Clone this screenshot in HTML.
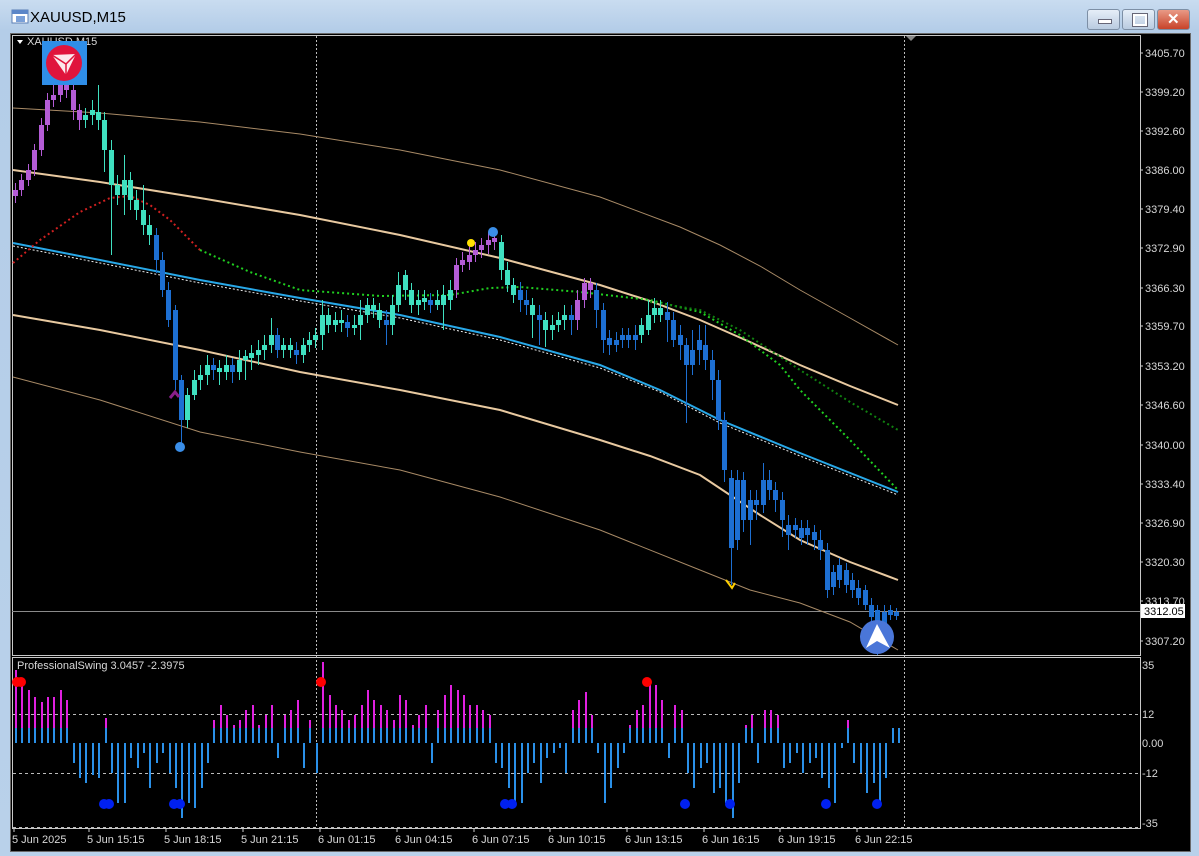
<!DOCTYPE html>
<html><head><meta charset="utf-8"><style>
html,body{margin:0;padding:0;width:1199px;height:856px;overflow:hidden;background:#bcd3ea;font-family:"Liberation Sans",sans-serif}
#win{position:absolute;left:0;top:0;width:1199px;height:856px;background:linear-gradient(#c9dcf0,#b4cde8 30px,#b9d1ea)}
#title{position:absolute;left:30px;top:9px;font-size:15px;color:#000}
.btn{position:absolute;top:9px;width:31px;height:19px;border:1px solid #7d8fa5;border-radius:3px;background:linear-gradient(#e6eef8,#b9cbe0)}
#chart{position:absolute;left:10px;top:33px;width:1181px;height:819px;background:#000;border:1px solid #6a6a6a;box-sizing:border-box}
svg text{font-family:"Liberation Sans",sans-serif;font-size:11px;fill:#d8d8d8}
</style></head><body>
<div id="win">
<svg width="20" height="18" style="position:absolute;left:11px;top:8px"><rect x="1" y="2" width="16" height="13" fill="#fff" stroke="#5b7fb5"/><rect x="1" y="2" width="16" height="4" fill="#5b86c8"/><rect x="5" y="8" width="9" height="6" fill="#7aa0d8"/></svg>
<div id="title">XAUUSD,M15</div>
<div class="btn" style="left:1087px"><div style="position:absolute;left:10px;top:9px;width:12px;height:3px;background:#fff;border:1px solid #667"></div></div>
<div class="btn" style="left:1122px"><div style="position:absolute;left:10px;top:4px;width:10px;height:8px;border:2px solid #fff;outline:1px solid #667"></div></div>
<div class="btn" style="left:1157px;background:linear-gradient(#e99a86,#c8432a)"><div style="position:absolute;left:9px;top:0px;color:#fff;font-weight:bold;font-size:15px">✕</div></div>
<div id="chart"></div>
<svg width="1199" height="856" style="position:absolute;left:0;top:0">
<rect x="12.5" y="35.5" width="1128" height="620" fill="none" stroke="#c8c8c8"/>
<rect x="12.5" y="657.5" width="1128" height="171" fill="none" stroke="#c8c8c8"/>
<line x1="12" y1="611.5" x2="1140" y2="611.5" stroke="#8a8a8a"/>
<line x1="316.5" y1="36" x2="316.5" y2="828" stroke="#bbb" stroke-dasharray="2,2"/>
<line x1="904.5" y1="36" x2="904.5" y2="828" stroke="#bbb" stroke-dasharray="2,2"/>
<polygon points="906,36 916,36 911,41" fill="#888"/>
<line x1="13" y1="714.5" x2="1140" y2="714.5" stroke="#bbb" stroke-dasharray="3,3"/>
<line x1="13" y1="773.5" x2="1140" y2="773.5" stroke="#bbb" stroke-dasharray="3,3"/>
<line x1="13" y1="827.5" x2="1140" y2="827.5" stroke="#bbb" stroke-dasharray="3,3"/>

<g stroke="#ccc">
<path d="M1140,53h3M1140,92h3M1140,131h3M1140,170h3M1140,209h3M1140,248h3M1140,288h3M1140,326h3M1140,366h3M1140,405h3M1140,445h3M1140,484h3M1140,523h3M1140,562h3M1140,601h3M1140,641h3"/>
<path d="M14,828v4M89,828v4M166,828v4M243,828v4M320,828v4M397,828v4M474,828v4M550,828v4M627,828v4M704,828v4M780,828v4M857,828v4"/>
</g>
<text x="1145" y="57">3405.70</text><text x="1145" y="96">3399.20</text><text x="1145" y="135">3392.60</text><text x="1145" y="174">3386.00</text><text x="1145" y="213">3379.40</text><text x="1145" y="252">3372.90</text><text x="1145" y="292">3366.30</text><text x="1145" y="330">3359.70</text><text x="1145" y="370">3353.20</text><text x="1145" y="409">3346.60</text><text x="1145" y="449">3340.00</text><text x="1145" y="488">3333.40</text><text x="1145" y="527">3326.90</text><text x="1145" y="566">3320.30</text><text x="1145" y="605">3313.70</text><text x="1145" y="645">3307.20</text>
<rect x="1141" y="604" width="44" height="14" fill="#fff"/><text x="1144" y="615" style="fill:#000">3312.05</text>
<text x="1142" y="669">35</text><text x="1142" y="718">12</text><text x="1142" y="747">0.00</text><text x="1142" y="777">-12</text><text x="1142" y="827">-35</text>
<text x="12" y="843">5 Jun 2025</text><text x="87" y="843">5 Jun 15:15</text><text x="164" y="843">5 Jun 18:15</text><text x="241" y="843">5 Jun 21:15</text><text x="318" y="843">6 Jun 01:15</text><text x="395" y="843">6 Jun 04:15</text><text x="472" y="843">6 Jun 07:15</text><text x="548" y="843">6 Jun 10:15</text><text x="625" y="843">6 Jun 13:15</text><text x="702" y="843">6 Jun 16:15</text><text x="778" y="843">6 Jun 19:15</text><text x="855" y="843">6 Jun 22:15</text>
<text x="17" y="669">ProfessionalSwing 3.0457 -2.3975</text>
<polygon points="17,40 23,40 20,44" fill="#fff"/><text x="27" y="45">XAUUSD,M15</text>

<g fill="none">
<polyline stroke="#a88a66" stroke-width="1" points="13,108 100,113 200,122 300,134 400,150 500,170 600,197 680,227 720,245 760,266 800,290 850,318 898,345"/>
<polyline stroke="#e8c9a0" stroke-width="2" points="13,170 100,182 200,198 300,215 400,235 500,258 600,285 650,301 700,320 750,342 800,365 850,386 898,405"/>
<polyline stroke="#e8c9a0" stroke-width="2" points="13,315 100,330 200,350 300,372 400,390 500,410 600,440 650,456 700,475 730,495 760,515 800,540 850,562 898,580"/>
<polyline stroke="#a88a66" stroke-width="1" points="13,377 100,400 200,432 300,452 400,470 500,497 600,530 700,570 750,590 800,603 850,622 898,650"/>
<polyline stroke="#eee" stroke-width="1" stroke-dasharray="2,2" points="13,246 100,263 200,283 300,301 400,318 500,340 600,368 660,392 720,423 800,456 898,495"/>
<polyline stroke="#28a8e8" stroke-width="2" points="13,243 100,260 200,280 300,298 400,315 500,337 600,365 660,390 720,420 800,453 898,492"/>
<polyline stroke="#d02020" stroke-width="2" stroke-dasharray="2,3" points="13,263 40,240 80,212 110,198 130,196 150,205 170,220 185,235 200,250"/>
<polyline stroke="#20d020" stroke-width="2" stroke-dasharray="2,3" points="200,250 250,272 300,290 380,296 450,295 490,288 520,287 580,292 650,300 700,312 740,335 780,365 800,390 850,440 898,490"/>
<polyline stroke="#108010" stroke-width="2" stroke-dasharray="2,3" points="650,302 700,310 740,330 800,370 850,402 898,430"/>
</g>

<path fill="#b45cd6" d="M13,190h5v6h-5zM15,183h1v20h-1zM19,180h5v10h-5zM21,174h1v22h-1zM26,170h5v10h-5zM28,164h1v22h-1zM32,150h5v20h-5zM34,144h1v32h-1zM39,125h5v25h-5zM41,118h1v38h-1zM45,100h5v25h-5zM47,93h1v38h-1zM51,95h5v5h-5zM53,85h1v22h-1zM58,85h5v10h-5zM60,72h1v30h-1zM64,85h5v5h-5zM66,78h1v20h-1zM71,90h5v20h-5zM73,85h1v35h-1zM77,110h5v10h-5zM79,104h1v26h-1zM454,265h5v25h-5zM456,258h1v40h-1zM460,260h5v5h-5zM462,252h1v20h-1zM467,255h5v7h-5zM469,245h1v25h-1zM473,250h5v5h-5zM475,242h1v20h-1zM479,245h5v5h-5zM481,238h1v20h-1zM486,240h5v5h-5zM488,232h1v22h-1zM492,238h5v4h-5zM494,230h1v20h-1zM575,300h5v20h-5zM577,290h1v40h-1zM582,283h5v17h-5zM584,278h1v30h-1zM588,283h5v7h-5zM590,278h1v20h-1z"/>
<path fill="#3fe0c0" d="M83,115h5v5h-5zM85,108h1v20h-1zM90,110h5v5h-5zM92,100h1v25h-1zM96,112h5v8h-5zM98,85h1v45h-1zM102,120h5v30h-5zM104,112h1v60h-1zM109,150h5v35h-5zM111,140h1v115h-1zM115,185h5v10h-5zM117,175h1v30h-1zM122,180h5v15h-5zM124,155h1v60h-1zM128,180h5v20h-5zM130,172h1v38h-1zM134,200h5v10h-5zM136,190h1v30h-1zM141,210h5v15h-5zM143,185h1v50h-1zM147,225h5v10h-5zM149,215h1v30h-1zM185,395h5v25h-5zM187,388h1v40h-1zM192,380h5v15h-5zM194,370h1v30h-1zM198,375h5v5h-5zM200,365h1v25h-1zM205,365h5v10h-5zM207,355h1v30h-1zM217,368h5v4h-5zM219,360h1v25h-1zM224,365h5v7h-5zM226,355h1v25h-1zM237,360h5v12h-5zM239,350h1v30h-1zM243,356h5v4h-5zM245,350h1v30h-1zM249,353h5v5h-5zM251,345h1v25h-1zM256,350h5v5h-5zM258,340h1v25h-1zM262,345h5v5h-5zM264,335h1v25h-1zM269,335h5v10h-5zM271,318h1v35h-1zM281,345h5v5h-5zM283,338h1v20h-1zM288,345h5v5h-5zM290,338h1v20h-1zM301,345h5v10h-5zM303,338h1v25h-1zM307,340h5v5h-5zM309,332h1v20h-1zM313,335h5v5h-5zM315,328h1v20h-1zM320,315h5v20h-5zM322,300h1v50h-1zM326,315h5v10h-5zM328,308h1v25h-1zM333,320h5v5h-5zM335,312h1v20h-1zM339,320h5v3h-5zM341,310h1v22h-1zM352,325h5v3h-5zM354,315h1v20h-1zM358,315h5v10h-5zM360,300h1v40h-1zM365,305h5v10h-5zM367,298h1v25h-1zM371,305h5v5h-5zM373,298h1v20h-1zM377,310h5v10h-5zM379,303h1v25h-1zM390,305h5v20h-5zM392,295h1v40h-1zM396,285h5v20h-5zM398,272h1v40h-1zM403,275h5v15h-5zM405,270h1v30h-1zM409,290h5v15h-5zM411,283h1v30h-1zM416,300h5v5h-5zM418,290h1v25h-1zM422,298h5v4h-5zM424,290h1v20h-1zM435,300h5v5h-5zM437,290h1v20h-1zM441,295h5v10h-5zM443,285h1v45h-1zM448,290h5v10h-5zM450,280h1v30h-1zM499,242h5v28h-5zM501,235h1v45h-1zM505,270h5v15h-5zM507,262h1v30h-1zM511,285h5v10h-5zM513,278h1v25h-1zM530,305h5v10h-5zM532,298h1v40h-1zM543,320h5v10h-5zM545,312h1v35h-1zM550,325h5v5h-5zM552,315h1v25h-1zM556,320h5v5h-5zM558,312h1v20h-1zM562,315h5v5h-5zM564,305h1v25h-1zM639,325h5v10h-5zM641,318h1v25h-1zM646,315h5v15h-5zM648,300h1v35h-1zM652,308h5v7h-5zM654,298h1v25h-1zM658,308h5v7h-5zM660,300h1v22h-1z"/>
<path fill="#1d6fd2" d="M154,235h5v25h-5zM156,228h1v45h-1zM160,260h5v30h-5zM162,252h1v45h-1zM166,290h5v30h-5zM168,282h1v45h-1zM173,310h5v70h-5zM175,305h1v85h-1zM179,380h5v40h-5zM181,375h1v70h-1zM211,365h5v5h-5zM213,358h1v22h-1zM230,365h5v7h-5zM232,358h1v25h-1zM275,335h5v15h-5zM277,328h1v30h-1zM294,350h5v5h-5zM296,342h1v22h-1zM345,322h5v6h-5zM347,315h1v22h-1zM384,320h5v5h-5zM386,310h1v35h-1zM428,300h5v5h-5zM430,293h1v20h-1zM518,290h5v10h-5zM520,282h1v30h-1zM524,300h5v5h-5zM526,290h1v25h-1zM537,315h5v5h-5zM539,305h1v40h-1zM569,315h5v5h-5zM571,305h1v30h-1zM594,290h5v20h-5zM596,283h1v45h-1zM601,310h5v30h-5zM603,303h1v50h-1zM607,338h5v7h-5zM609,330h1v25h-1zM614,340h5v5h-5zM616,332h1v20h-1zM620,335h5v5h-5zM622,328h1v20h-1zM626,335h5v5h-5zM628,328h1v20h-1zM633,335h5v5h-5zM635,325h1v25h-1zM665,312h5v8h-5zM667,302h1v40h-1zM671,320h5v20h-5zM673,312h1v35h-1zM678,335h5v10h-5zM680,325h1v35h-1zM684,345h5v20h-5zM686,338h1v85h-1zM690,350h5v15h-5zM692,330h1v45h-1zM697,340h5v10h-5zM699,325h1v40h-1zM703,345h5v15h-5zM705,325h1v45h-1zM710,360h5v20h-5zM712,350h1v50h-1zM716,380h5v40h-5zM718,370h1v60h-1zM722,420h5v50h-5zM724,412h1v70h-1zM729,478h5v70h-5zM731,470h1v115h-1zM735,480h5v60h-5zM737,470h1v80h-1zM741,480h5v40h-5zM743,472h1v60h-1zM748,500h5v20h-5zM750,490h1v55h-1zM754,500h5v5h-5zM756,490h1v30h-1zM761,480h5v25h-5zM763,463h1v50h-1zM767,480h5v10h-5zM769,470h1v30h-1zM773,490h5v10h-5zM775,482h1v30h-1zM780,500h5v20h-5zM782,492h1v45h-1zM786,525h5v10h-5zM788,515h1v35h-1zM793,525h5v5h-5zM795,518h1v20h-1zM799,528h5v10h-5zM801,520h1v25h-1zM805,528h5v7h-5zM807,520h1v25h-1zM812,532h5v8h-5zM814,525h1v25h-1zM818,540h5v10h-5zM820,530h1v30h-1zM825,550h5v40h-5zM827,543h1v55h-1zM831,572h5v15h-5zM833,565h1v30h-1zM837,565h5v15h-5zM839,558h1v30h-1zM844,570h5v15h-5zM846,563h1v30h-1zM850,580h5v10h-5zM852,573h1v25h-1zM856,588h5v10h-5zM858,580h1v25h-1zM863,590h5v15h-5zM865,585h1v25h-1zM869,605h5v12h-5zM871,598h1v40h-1zM875,610h5v30h-5zM877,605h1v50h-1zM882,612h5v15h-5zM884,605h1v30h-1zM888,610h5v5h-5zM890,605h1v15h-1zM894,612h5v4h-5zM896,608h1v12h-1z"/>

<circle cx="180" cy="447" r="5" fill="#3a8ee8"/><circle cx="493" cy="232" r="5" fill="#3a8ee8"/><circle cx="471" cy="243" r="4" fill="#ffe000"/>
<path d="M726,580 l6,8 l3,-5" stroke="#ffd000" stroke-width="2" fill="none"/><path d="M170,398 l5,-6 l4,5" stroke="#8a1f8a" stroke-width="3" fill="none"/>
<rect x="42" y="41" width="45" height="44" fill="#2f8ee8"/><circle cx="64" cy="63" r="18" fill="#e0143c"/><path d="M52,55 L76,54 L66,75 Z" fill="#fff" opacity="0.9"/><path d="M52,55 L66,64 L76,54 M66,64 L66,75" stroke="#e0143c" stroke-width="1.5" fill="none"/>
<circle cx="877" cy="637" r="17" fill="#4a76d8"/><path d="M866,648 L877,624 L890,648 L877,641 Z" fill="#fff"/>

<path fill="#e020e0" d="M15,670h2V728h-2zM21,682h2V728h-2zM28,690h2V728h-2zM34,697h2V728h-2zM41,702h2V728h-2zM47,697h2V728h-2zM53,697h2V728h-2zM60,690h2V728h-2zM66,700h2V728h-2zM105,718h2V728h-2zM213,720h2V728h-2zM220,705h2V728h-2zM226,715h2V728h-2zM233,725h2V728h-2zM239,720h2V728h-2zM245,710h2V728h-2zM252,705h2V728h-2zM258,725h2V728h-2zM265,715h2V728h-2zM271,705h2V728h-2zM284,715h2V728h-2zM290,710h2V728h-2zM297,700h2V728h-2zM309,720h2V728h-2zM322,662h2V728h-2zM329,695h2V728h-2zM335,705h2V728h-2zM341,710h2V728h-2zM348,720h2V728h-2zM354,715h2V728h-2zM361,705h2V728h-2zM367,690h2V728h-2zM373,700h2V728h-2zM380,705h2V728h-2zM386,710h2V728h-2zM393,720h2V728h-2zM399,695h2V728h-2zM405,700h2V728h-2zM412,725h2V728h-2zM418,715h2V728h-2zM425,705h2V728h-2zM437,710h2V728h-2zM444,695h2V728h-2zM450,685h2V728h-2zM457,690h2V728h-2zM463,695h2V728h-2zM469,705h2V728h-2zM476,705h2V728h-2zM482,710h2V728h-2zM489,715h2V728h-2zM572,710h2V728h-2zM578,700h2V728h-2zM585,692h2V728h-2zM591,715h2V728h-2zM629,725h2V728h-2zM636,710h2V728h-2zM642,705h2V728h-2zM649,680h2V728h-2zM655,685h2V728h-2zM661,700h2V728h-2zM674,705h2V728h-2zM681,710h2V728h-2zM745,725h2V728h-2zM751,715h2V728h-2zM764,710h2V728h-2zM770,710h2V728h-2zM777,715h2V728h-2zM847,720h2V728h-2zM892,733h2V728h-2zM898,735h2V728h-2z"/>
<path fill="#2a90e8" d="M15,728h2V743h-2zM21,728h2V743h-2zM28,728h2V743h-2zM34,728h2V743h-2zM41,728h2V743h-2zM47,728h2V743h-2zM53,728h2V743h-2zM60,728h2V743h-2zM66,728h2V743h-2zM73,743h2V763h-2zM79,743h2V778h-2zM85,743h2V783h-2zM92,743h2V775h-2zM98,743h2V778h-2zM105,728h2V743h-2zM111,743h2V773h-2zM117,743h2V803h-2zM124,743h2V803h-2zM130,743h2V758h-2zM137,743h2V768h-2zM143,743h2V753h-2zM149,743h2V788h-2zM156,743h2V763h-2zM162,743h2V753h-2zM169,743h2V773h-2zM175,743h2V788h-2zM181,743h2V818h-2zM188,743h2V803h-2zM194,743h2V808h-2zM201,743h2V788h-2zM207,743h2V763h-2zM213,728h2V743h-2zM220,728h2V743h-2zM226,728h2V743h-2zM233,728h2V743h-2zM239,728h2V743h-2zM245,728h2V743h-2zM252,728h2V743h-2zM258,728h2V743h-2zM265,728h2V743h-2zM271,728h2V743h-2zM277,743h2V758h-2zM284,728h2V743h-2zM290,728h2V743h-2zM297,728h2V743h-2zM303,743h2V768h-2zM309,728h2V743h-2zM316,743h2V773h-2zM322,728h2V743h-2zM329,728h2V743h-2zM335,728h2V743h-2zM341,728h2V743h-2zM348,728h2V743h-2zM354,728h2V743h-2zM361,728h2V743h-2zM367,728h2V743h-2zM373,728h2V743h-2zM380,728h2V743h-2zM386,728h2V743h-2zM393,728h2V743h-2zM399,728h2V743h-2zM405,728h2V743h-2zM412,728h2V743h-2zM418,728h2V743h-2zM425,728h2V743h-2zM431,743h2V763h-2zM437,728h2V743h-2zM444,728h2V743h-2zM450,728h2V743h-2zM457,728h2V743h-2zM463,728h2V743h-2zM469,728h2V743h-2zM476,728h2V743h-2zM482,728h2V743h-2zM489,728h2V743h-2zM495,743h2V763h-2zM501,743h2V768h-2zM508,743h2V788h-2zM514,743h2V803h-2zM521,743h2V803h-2zM527,743h2V773h-2zM533,743h2V763h-2zM540,743h2V783h-2zM546,743h2V758h-2zM553,743h2V753h-2zM559,743h2V748h-2zM565,743h2V773h-2zM572,728h2V743h-2zM578,728h2V743h-2zM585,728h2V743h-2zM591,728h2V743h-2zM597,743h2V753h-2zM604,743h2V803h-2zM610,743h2V788h-2zM617,743h2V768h-2zM623,743h2V753h-2zM629,728h2V743h-2zM636,728h2V743h-2zM642,728h2V743h-2zM649,728h2V743h-2zM655,728h2V743h-2zM661,728h2V743h-2zM668,743h2V758h-2zM674,728h2V743h-2zM681,728h2V743h-2zM687,743h2V773h-2zM693,743h2V788h-2zM700,743h2V768h-2zM706,743h2V763h-2zM713,743h2V793h-2zM719,743h2V788h-2zM725,743h2V803h-2zM732,743h2V818h-2zM738,743h2V783h-2zM745,728h2V743h-2zM751,728h2V743h-2zM757,743h2V763h-2zM764,728h2V743h-2zM770,728h2V743h-2zM777,728h2V743h-2zM783,743h2V768h-2zM789,743h2V763h-2zM796,743h2V753h-2zM802,743h2V773h-2zM809,743h2V763h-2zM815,743h2V758h-2zM821,743h2V778h-2zM828,743h2V788h-2zM834,743h2V803h-2zM841,743h2V748h-2zM847,728h2V743h-2zM853,743h2V763h-2zM860,743h2V773h-2zM866,743h2V793h-2zM873,743h2V783h-2zM879,743h2V803h-2zM885,743h2V778h-2zM892,728h2V743h-2zM898,728h2V743h-2z"/>
<circle cx="17" cy="682" r="5" fill="#f00"/><circle cx="21" cy="682" r="5" fill="#f00"/><circle cx="321" cy="682" r="5" fill="#f00"/><circle cx="647" cy="682" r="5" fill="#f00"/>
<g fill="#0020f0"><circle cx="104" cy="804" r="5"/><circle cx="109" cy="804" r="5"/><circle cx="174" cy="804" r="5"/><circle cx="180" cy="804" r="5"/><circle cx="505" cy="804" r="5"/><circle cx="512" cy="804" r="5"/><circle cx="685" cy="804" r="5"/><circle cx="730" cy="804" r="5"/><circle cx="826" cy="804" r="5"/><circle cx="877" cy="804" r="5"/></g>
</svg>
</div>
</body></html>
